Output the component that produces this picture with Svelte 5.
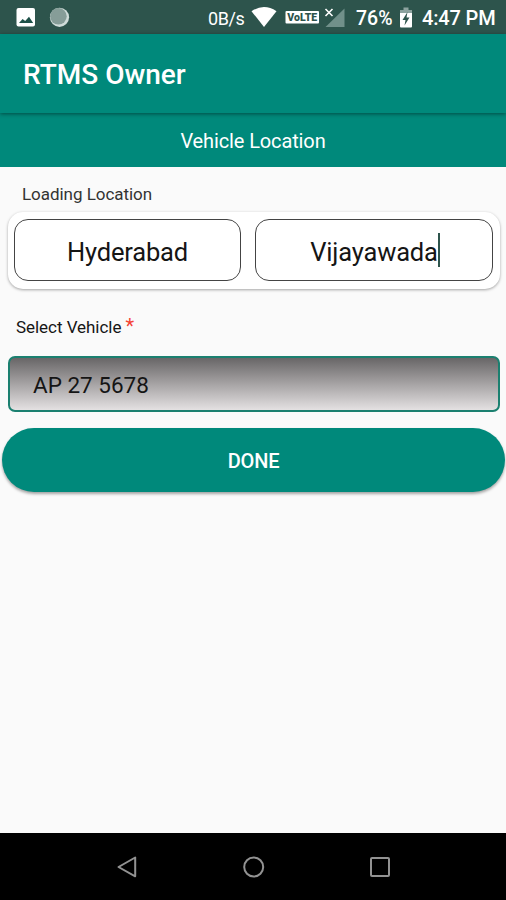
<script lang="ts">
  let loading = 'Hyderabad'
  let unloading = 'Vijayawada'
  let vehicle = 'AP 27 5678'
</script>

<div class="screen">
  <div class="statusBar">
    <svg class="statusIcons" width="60" height="34" viewBox="0 0 60 34">
      <rect x="0.5" y="8" width="18.5" height="18.5" rx="2" fill="#fff" />
      <path d="M3 23l3.600-4 2.600 2 3.800-4.200 4.200 6.200z" fill="#1d5148" />
      <circle cx="43.500" cy="17.300" r="9.600" fill="#cfdcd9" />
      <circle cx="42.400" cy="16.300" r="8.300" fill="#869d98" />
    </svg>
    <span class="speed">0B/s</span>
    <svg class="signals" width="96" height="34" viewBox="0 0 96 34">
      <path d="M.5 11.2Q13 2.8 25.5 11.2L13 27z" fill="#fff" />
      <rect x="34.500" y="11" width="33.500" height="12.500" rx="1" fill="#fff" />
      <text x="51.200" y="21" class="volte" text-anchor="middle" textLength="30">VoLTE</text>
      <path d="M93.500 8.500v18.500h-19z" fill="#71908a" />
      <path d="M74.500 9l7 7M81.500 9l-7 7" stroke="#fff" stroke-width="1.600" />
    </svg>
    <span class="percent">76%</span>
    <svg class="battery" width="12" height="34" viewBox="0 0 12 34">
      <path d="M3.500 7.500h5v2.500H12v6H0v-6h3.500z" fill="#8da39f" />
      <path d="M0 13h12v13.500q0 1-1 1H1q-1 0-1-1z" fill="#fff" />
      <path d="M7.500 12L2.500 20h3l-1 5.500L9.500 17.500h-3z" fill="#2d544c" />
    </svg>
    <span class="clock">4:47 PM</span>
  </div>

  <header class="toolbar"><h1>RTMS Owner</h1></header>
  <div class="subtitle">Vehicle Location</div>

  <main>
    <div class="label loadingLabel">Loading Location</div>
    <div class="locationCard">
      <div class="location from">{loading}</div>
      <div class="location to">{unloading}<span class="caret"></span></div>
    </div>
    <div class="label vehicleLabel">Select Vehicle <span class="required">*</span></div>
    <div class="vehicle">{vehicle}</div>
    <button class="done">DONE</button>
  </main>

  <nav>
    <svg width="22" height="24" viewBox="0 0 22 24"><path d="M19.200 2.500v18.800L2.500 12z" /></svg>
    <svg width="24" height="24" viewBox="0 0 24 24"><circle cx="11.700" cy="12" r="9.500" /></svg>
    <svg width="22" height="24" viewBox="0 0 22 24"><rect x="2" y="3" width="18" height="18" rx="1" /></svg>
  </nav>
</div>

<style>
  :global(body) {
    margin: 0;
  }

  .screen {
    width: 506px;
    height: 900px;
    display: flex;
    flex-direction: column;
    overflow: hidden;
    background: #fafafa;
    color: #151515;
    font-family: Roboto, sans-serif;
  }

  .statusBar {
    flex: none;
    height: 34px;
    display: flex;
    align-items: center;
    padding-left: 16px;
    background: #2d544c;
    color: #fff;
    white-space: nowrap;
  }

  .statusBar svg {
    flex: none;
  }

  .statusBar span {
    flex: none;
    padding-top: 2px;
  }

  .speed {
    width: 43px;
    margin-left: 132px;
    font-size: 18px;
    letter-spacing: -0.4px;
  }

  .volte {
    font-family: Roboto, sans-serif;
    font-size: 10.5px;
    font-weight: 900;
    fill: #2d544c;
  }

  .percent {
    width: 44px;
    margin-left: 9px;
    font-size: 19.5px;
    font-weight: 500;
  }

  .clock {
    margin-left: 10px;
    font-size: 20px;
    font-weight: 500;
    letter-spacing: -0.15px;
  }

  .toolbar {
    flex: none;
    height: 79px;
    display: flex;
    align-items: center;
    padding: 2px 23px 0;
    box-sizing: border-box;
    background: #00897b;
    box-shadow: 0 1px 4px rgba(0, 0, 0, 0.45);
    z-index: 1;
  }

  h1 {
    margin: 0;
    color: #fff;
    font-size: 28px;
    font-weight: 500;
  }

  .subtitle {
    flex: none;
    height: 54px;
    line-height: 57px;
    text-align: center;
    background: #00897b;
    color: #fff;
    font-size: 20px;
    letter-spacing: -0.12px;
  }

  main {
    flex: 1;
    display: flex;
    flex-direction: column;
  }

  .label {
    height: 20px;
    line-height: 20px;
    font-size: 17px;
    letter-spacing: -0.04px;
  }

  .loadingLabel {
    margin: 17px 0 0 22px;
    color: #333;
  }

  .locationCard {
    display: flex;
    gap: 14px;
    height: 77px;
    margin: 8px 6px 0 8px;
    padding: 7px 7px 8px 6px;
    box-sizing: border-box;
    border-radius: 15px;
    background: #fff;
    box-shadow: 0 1px 3px rgba(0, 0, 0, 0.35);
  }

  .location {
    display: flex;
    align-items: center;
    justify-content: center;
    box-sizing: border-box;
    padding-top: 3px;
    border: 1px solid #444;
    border-radius: 14px;
    font-size: 25.5px;
    letter-spacing: -0.18px;
  }

  .from {
    width: 227px;
  }

  .to {
    width: 238px;
    padding-left: 2px;
  }

  .caret {
    width: 2px;
    height: 34px;
    margin-top: -4px;
    background: #2d544c;
  }

  .vehicleLabel {
    margin: 27px 0 0 16px;
  }

  .required {
    color: #f44336;
    font-size: 20px;
    line-height: 1;
  }

  .vehicle {
    height: 56px;
    margin: 20px 6px 0 8px;
    padding-left: 23px;
    box-sizing: border-box;
    border: 2px solid #1b8070;
    border-radius: 7px;
    background: linear-gradient(#686667, #a09d9e 45%, #e4e1e2);
    line-height: 54px;
    font-size: 22.5px;
  }

  .done {
    height: 64px;
    margin: 16px 1px 0 2px;
    padding: 2px 0 0;
    border: 0;
    border-radius: 32px;
    background: #00897b;
    box-shadow: 0 2px 3px rgba(0, 0, 0, 0.35);
    color: #fff;
    font-family: Roboto, sans-serif;
    font-size: 20px;
    font-weight: 500;
    letter-spacing: -0.15px;
  }

  nav {
    flex: none;
    height: 67px;
    display: flex;
    justify-content: space-between;
    align-items: center;
    padding: 0 115px 0 116px;
    box-sizing: border-box;
    background: #000;
  }

  nav path,
  nav circle,
  nav rect {
    fill: none;
    stroke: #929292;
    stroke-width: 2;
    stroke-linejoin: round;
  }
</style>
